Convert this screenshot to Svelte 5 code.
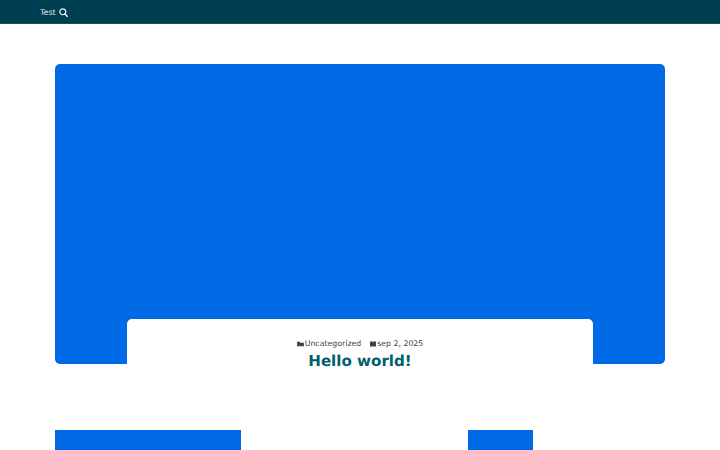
<script>
	let title = 'Hello world!';
	let category = 'Uncategorized';
	let date = 'sep 2, 2025';
</script>

<header class="topbar">
	<a class="nav-link" href="#test">Test</a>
	<button class="search" aria-label="Search">
		<svg viewBox="0 0 10 10" width="9" height="9">
			<circle cx="4.2" cy="4.2" r="3.3" fill="none" stroke="currentColor" stroke-width="1.3" />
			<path d="M6.6 6.6 L9.4 9.4" stroke="currentColor" stroke-width="1.6" stroke-linecap="round" />
		</svg>
	</button>
</header>

<main class="page">
	<article class="featured">
		<div class="hero"></div>
		<div class="card">
			<div class="meta">
				<span class="meta-item">
					<svg viewBox="0 0 8 7" width="7" height="6"><path d="M0 1 L3 1 L4 2 L8 2 L8 6 L0 6 Z" fill="currentColor" /></svg>
					{category}
				</span>
				<span class="meta-item">
					<svg viewBox="0 0 7 7" width="6" height="6"><path d="M0 1 L7 1 L7 6.5 L0 6.5 Z M1 0 H2 V1 H1 Z M5 0 H6 V1 H5 Z" fill="currentColor" /></svg>
					{date}
				</span>
			</div>
			<h1>{title}</h1>
		</div>
	</article>

	<section class="thumbs">
		<div class="thumb wide"></div>
		<div class="thumb narrow"></div>
	</section>
</main>

<style>
	:global(body) {
		margin: 0;
		background: #fff;
		font-family: "DejaVu Sans", sans-serif;
		text-rendering: geometricPrecision;
	}
	.topbar {
		height: 24px;
		box-sizing: border-box;
		background: #003f52;
		border-bottom: 1px solid #0f5566;
		padding: 1px 0 0 40px;
		display: flex;
		align-items: center;
		gap: 3.5px;
	}
	.nav-link {
		color: #dfe9ec;
		font-size: 8px;
		text-decoration: none;
	}
	.search {
		display: flex;
		padding: 0;
		border: 0;
		background: none;
		color: #e8f0f2;
	}
	.page {
		padding: 40px 55px 0;
		height: 426px;
		box-sizing: border-box;
		overflow: hidden;
	}
	.hero {
		height: 300px;
		background: #006ae6;
		border-radius: 5px;
	}
	.card {
		width: 466.8px;
		height: 60px;
		margin: -45px auto 0;
		position: relative;
		box-sizing: border-box;
		padding-top: 19.5px;
		background: #fff;
		border-radius: 5px 5px 0 0;
		text-align: center;
	}
	.meta {
		display: flex;
		justify-content: center;
		gap: 9px;
		font-size: 7.8px;
		line-height: 10px;
		color: #444;
	}
	.meta-item {
		display: flex;
		align-items: center;
		gap: 1px;
	}
	h1 {
		margin: 3px 0 0;
		font-size: 15.1px;
		line-height: 19px;
		font-weight: 700;
		color: #00606e;
	}
	.featured {
		margin-bottom: 51px;
	}
	.thumbs {
		display: flex;
		gap: 227px;
	}
	.thumb {
		height: 40px;
		background: #006ae6;
	}
	.wide {
		width: 186.3px;
	}
	.narrow {
		width: 65px;
	}
</style>
